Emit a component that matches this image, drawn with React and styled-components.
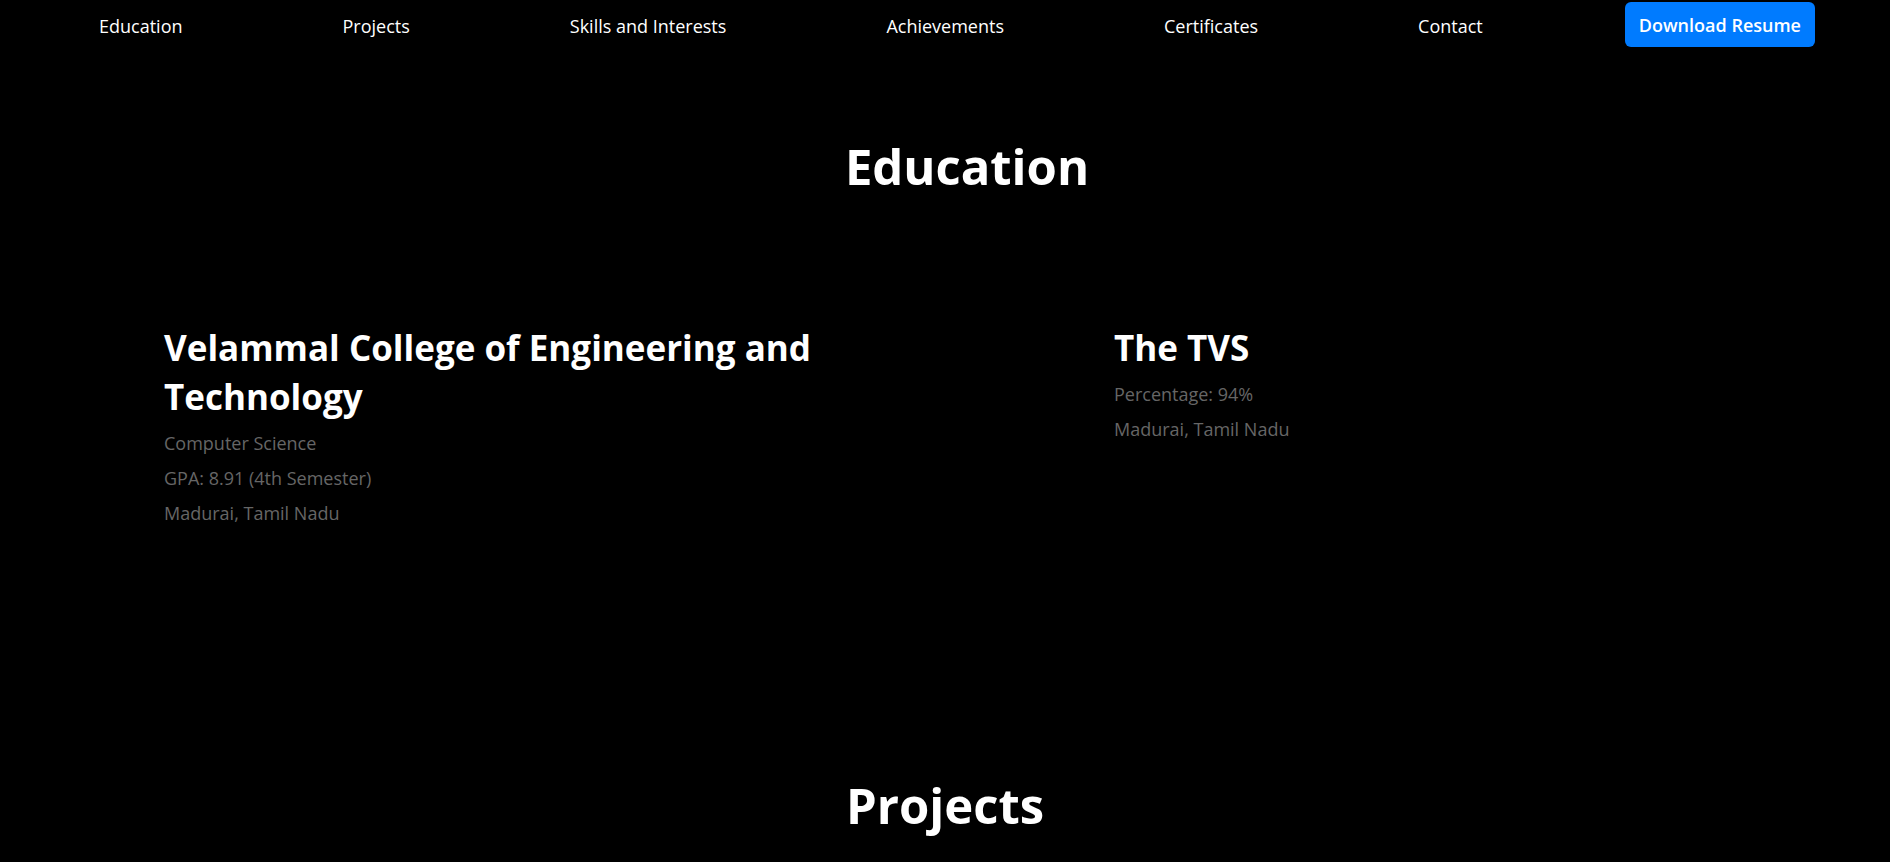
import styled, { createGlobalStyle } from "styled-components";

const GlobalStyle = createGlobalStyle`
  * {
    box-sizing: border-box;
  }
  body {
    margin: 0;
    background: #000;
    color: #fff;
    font-family: "Open Sans", "Noto Sans", sans-serif;
    overflow: hidden;
  }
`;

const links = [
  "Education",
  "Projects",
  "Skills and Interests",
  "Achievements",
  "Certificates",
  "Contact",
];

const schools = [
  {
    name: "Velammal College of Engineering and Technology",
    details: ["Computer Science", "GPA: 8.91 (4th Semester)", "Madurai, Tamil Nadu"],
  },
  {
    name: "The TVS",
    details: ["Percentage: 94%", "Madurai, Tamil Nadu"],
  },
];

function App() {
  return (
    <>
      <GlobalStyle />
      <Nav>
        <LinkList>
          {links.map((l) => (
            <NavLink key={l} href={`#${l}`}>
              {l}
            </NavLink>
          ))}
        </LinkList>
        <ResumeButton>Download Resume</ResumeButton>
      </Nav>

      <Section $shift={44} $bottom={161}>
        <SectionTitle>Education</SectionTitle>
        <CardGrid>
          {schools.map((s) => (
            <Card key={s.name}>
              <SchoolName>{s.name}</SchoolName>
              {s.details.map((d) => (
                <Detail key={d}>{d}</Detail>
              ))}
            </Card>
          ))}
        </CardGrid>
      </Section>

      <Section $bottom={80}>
        <SectionTitle>Projects</SectionTitle>
      </Section>
    </>
  );
}

const Nav = styled.nav`
  height: 49px;
  display: flex;
  align-items: center;
  padding: 0 75px 0 99px;
`;

const LinkList = styled.div`
  display: flex;
  align-items: center;
  gap: 160px;
`;

const NavLink = styled.a`
  color: #fff;
  text-decoration: none;
  font-size: 18px;
  line-height: 24px;
  margin-top: 2px;
`;

const ResumeButton = styled.button`
  margin-left: auto;
  height: 45px;
  padding: 0 14px;
  border: none;
  border-radius: 6px;
  background: #007bff;
  color: #fff;
  font-family: inherit;
  font-size: 18px;
  font-weight: 600;
  cursor: pointer;
`;

const Section = styled.section`
  padding: 87px 0 ${(p) => p.$bottom}px ${(p) => p.$shift || 0}px;
`;

const SectionTitle = styled.h2`
  margin: 0;
  text-align: center;
  font-size: 49px;
  line-height: 60px;
  font-weight: 700;
`;

const CardGrid = styled.div`
  margin-top: 127px;
  display: grid;
  grid-template-columns: 656px 656px;
  column-gap: 294px;
  justify-content: center;
`;

const Card = styled.div`
  display: flex;
  flex-direction: column;
  gap: 8px;
`;

const SchoolName = styled.h3`
  margin: 0 0 1px;
  font-size: 35px;
  line-height: 49px;
  font-weight: 700;
`;

const Detail = styled.p`
  margin: 0;
  font-size: 18px;
  line-height: 27px;
  color: #666;
`;

export default App;
